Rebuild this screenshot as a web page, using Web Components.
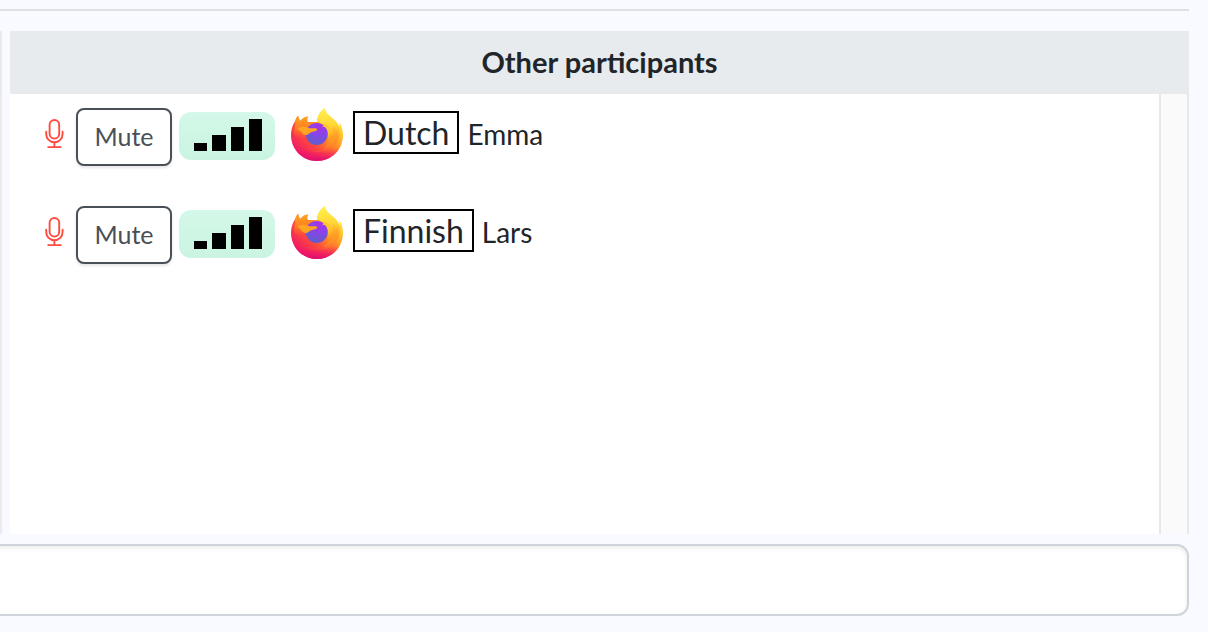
<!DOCTYPE html>
<html lang="en">
<head>
<meta charset="utf-8">
<title>Participants</title>
<style>
  body { margin: 0; background: #f9faff; color: #212529; font-family: Lato, "Liberation Sans", sans-serif; }
</style>
</head>
<body>
<call-page>
  <participants-panel heading="Other participants">
    <participant-row language="Dutch">Emma</participant-row>
    <participant-row language="Finnish">Lars</participant-row>
  </participants-panel>
  <message-box slot="footer"></message-box>
</call-page>

<script>
class BaseElement extends HTMLElement {
  render(html) {
    const template = document.createElement('template');
    template.innerHTML = html;
    this.attachShadow({ mode: 'open' }).append(template.content.cloneNode(true));
  }
}

customElements.define('call-page', class extends BaseElement {
  connectedCallback() {
    this.render(`
      <style>
        :host { display: flex; flex-direction: column; box-sizing: border-box; min-height: 100vh; padding: 9px 19px 16px 0; overflow: hidden; }
        hr { width: 100%; height: 2px; margin: 0 0 20px; border: 0; background: #dfe0e4; }
        main { flex: 1; display: flex; gap: 8px; margin-bottom: 10px; }
        .edge { width: 2px; background: linear-gradient(#e7ebee 63px, #ebebeb 63px); }
        ::slotted(participants-panel) { flex: 1; }
      </style>
      <hr>
      <main><div class="edge"></div><slot></slot></main>
      <slot name="footer"></slot>`);
  }
});

customElements.define('participants-panel', class extends BaseElement {
  connectedCallback() {
    this.render(`
      <style>
        :host { display: flex; flex-direction: column; background: #fff; }
        h2 { margin: 0; padding: 13px 0 14px; background: #e7ebee; font-size: 29px; line-height: 36px; font-weight: 700; text-align: center; }
        .body { flex: 1; display: flex; }
        .list { flex: 1; display: flex; flex-direction: column; gap: 40px; padding: 14px 34px; }
        .track { box-sizing: border-box; width: 30px; border: solid #e8e8e8; border-width: 0 2px; background: #fafafa; }
      </style>
      <h2>${this.getAttribute('heading')}</h2>
      <div class="body">
        <div class="list" role="list"><slot></slot></div>
        <div class="track"></div>
      </div>`);
  }
});

customElements.define('mic-icon', class extends BaseElement {
  connectedCallback() {
    this.render(`
      <style>:host { display: block; } svg { display: block; }</style>
      <svg width="20" height="30" viewBox="0 0 20 30" fill="none" stroke="#ff4b40" stroke-width="1.9" stroke-linecap="round" aria-hidden="true">
        <rect x="5.6" y="1" width="9.6" height="18.6" rx="4.8"/>
        <path d="M2.200 12.800v2.200a8.200 8.200 0 0 0 16.400 0v-2.200M10.400 23.400v4.700M4.200 28.100h12.600"/>
      </svg>`);
  }
});

customElements.define('signal-meter', class extends BaseElement {
  connectedCallback() {
    this.render(`
      <style>
        :host { display: flex; align-items: flex-end; gap: 5px; box-sizing: border-box; width: 96px; height: 48px; padding: 0 13px 9px 15px; border-radius: 12px; background: linear-gradient(#d4f8e9, #caf4e1); }
        i { flex: 1; background: #000; }
        i:nth-of-type(1) { height: 8px; }
        i:nth-of-type(2) { height: 16px; }
        i:nth-of-type(3) { height: 24px; }
        i:nth-of-type(4) { height: 32px; }
      </style>
      <i></i><i></i><i></i><i></i>`);
  }
});

customElements.define('firefox-logo', class extends BaseElement {
  connectedCallback() {
    this.render(`
      <style>:host { display: block; } svg { display: block; }</style>
      <svg width="52" height="53" viewBox="0 0 52 53" role="img" aria-label="Firefox">
        <defs>
          <linearGradient id="body" x1="46" y1="8" x2="8" y2="46" gradientUnits="userSpaceOnUse">
            <stop offset="0" stop-color="#fff04a"/><stop offset=".2" stop-color="#ffc42e"/><stop offset=".42" stop-color="#ff8a25"/><stop offset=".68" stop-color="#ff4a3c"/><stop offset="1" stop-color="#ee1768"/>
          </linearGradient>
          <linearGradient id="low" x1="26" y1="34" x2="26" y2="53" gradientUnits="userSpaceOnUse">
            <stop offset=".3" stop-color="#f5156c" stop-opacity="0"/><stop offset="1" stop-color="#de0c72"/>
          </linearGradient>
          <radialGradient id="globe" cx="29" cy="18" r="21" gradientUnits="userSpaceOnUse">
            <stop offset="0" stop-color="#a832e8"/><stop offset=".4" stop-color="#8c42ea"/><stop offset=".8" stop-color="#6759d2"/><stop offset="1" stop-color="#5a5ccc"/>
          </radialGradient>
          <linearGradient id="flame" x1="37" y1="0" x2="42" y2="44" gradientUnits="userSpaceOnUse">
            <stop offset="0" stop-color="#fff24d"/><stop offset=".4" stop-color="#ffd636"/><stop offset=".7" stop-color="#ff9b24"/><stop offset="1" stop-color="#ff6634" stop-opacity="0"/>
          </linearGradient>
          <linearGradient id="head" x1="10" y1="10" x2="9" y2="32" gradientUnits="userSpaceOnUse">
            <stop offset="0" stop-color="#ff9f1c"/><stop offset=".5" stop-color="#ff7a24"/><stop offset="1" stop-color="#ff4b37" stop-opacity="0"/>
          </linearGradient>
        </defs>
        <path fill="url(#body)" d="M4.500 12.500C4.800 10.500 6 8.800 7.300 8c.2 2 .8 3.500 1.900 4.900 1.700-2.200 4.400-4 7.800-4.500-1 1.700-1.100 3.700-.4 5.600 3.500-.2 6.600-.1 9.400-.1C26.300 8 29.200 3 33.700.2c.5 3.500 2.700 6 5.900 8.500 4.200 3.200 7.600 6.300 8.900 10.300l.2-4.500c2.300 4 3.300 8.400 3.300 12.500 0 14.600-11.500 26-26 26S0 41.500 0 27c0-4.600 1.200-9.800 4.500-14.500z"/>
        <path fill="url(#low)" d="M0 28c4 9 13 16 25 16 13 0 23-6 27-17 0 14.600-11.500 26-26 26S0 42 0 28z"/>
        <path fill="url(#flame)" d="M26 13.800C26.300 8 29.200 3 33.700.2c.5 3.500 2.700 6 5.900 8.500 5 3.800 8.200 8.100 8.900 13.300C49.800 34 42 42 31 43c5-4 7-10 5.500-18-1-5.500-5-10-10.500-11.200z"/>
        <path fill="#ff9b22" fill-opacity=".5" d="M42 18c2 10-1 18-9.500 22C42 38.500 48 31 46.500 21l-2 4c0-3-1-5.500-2.500-7z"/>
        <circle cx="25.700" cy="26" r="11" fill="url(#globe)"/>
        <path fill="#ffc52f" d="M31 18.500c2.500 0 4.600 1.200 5.500 3.200.9 2 1 4.800.3 7.300l3.200-6c-1-5-4.500-7.500-8.500-7.300l1.500 1.600z"/>
        <path fill="url(#head)" d="M4.500 12.500C4.800 10.500 6 8.800 7.300 8c.2 2 .8 3.500 1.900 4.900 1.700-2.200 4.400-4 7.800-4.500-1 1.700-1.100 3.700-.4 5.600 1.200 1 2.200 1.500 3.500 1.900-2 1.200-3.500 3-4.400 5.100-1 2.500-1.500 5-1.100 7.500C10 31 4 30 3 26z"/>
        <path fill="#ffa322" d="M6.500 20c4-1.800 8-1.300 11.500.2 2.800.4 5.400-.5 7.600.3 1.100.7.600 1.900-.8 2.400-2.600.8-5.200 1.200-7.100 2.800-1 .8-1.900 1.300-3 1.200-2.900-.3-4.600-1.300-4.200-3.100C9 23.200 7.500 22 6.500 20z"/>
      </svg>`);
  }
});

customElements.define('participant-row', class extends BaseElement {
  connectedCallback() {
    this.setAttribute('role', 'listitem');
    this.render(`
      <style>
        :host { display: flex; align-items: flex-start; height: 58px; }
        mic-icon { margin: 11px 12px 0 0; }
        button { box-sizing: border-box; width: 96px; height: 58px; margin: 0 7px 0 0; padding: 0 0 2px; border: 2px solid #495057; border-radius: 8px; background: #fff; color: #495057; font: 25px/32px Lato, "Liberation Sans", sans-serif; box-shadow: 0 2px 3px #0000001a; }
        signal-meter { margin: 4px 16px 0 0; }
        firefox-logo { margin-right: 10px; }
        .who { display: flex; align-items: baseline; gap: 8px; margin-top: 3px; font-size: 28px; line-height: 39px; }
        .language { padding: 0 8px; border: 2px solid #000; font-size: 32px; }
      </style>
      <mic-icon></mic-icon>
      <button type="button">Mute</button>
      <signal-meter></signal-meter>
      <firefox-logo></firefox-logo>
      <div class="who"><span class="language">${this.getAttribute('language')}</span><span><slot></slot></span></div>`);
  }
});

customElements.define('message-box', class extends BaseElement {
  connectedCallback() {
    this.render(`
      <style>
        :host { display: block; margin-left: -20px; }
        input { display: block; box-sizing: border-box; width: 100%; height: 72px; padding: 0 32px; border: 2px solid #ced4da; border-radius: 12px; outline: 0; background: #fff; color: inherit; font: 28px/36px Lato, "Liberation Sans", sans-serif; box-shadow: inset 0 2px 4px #00000014; }
      </style>
      <input type="text" aria-label="Message">`);
  }
});
</script>
</body>
</html>
